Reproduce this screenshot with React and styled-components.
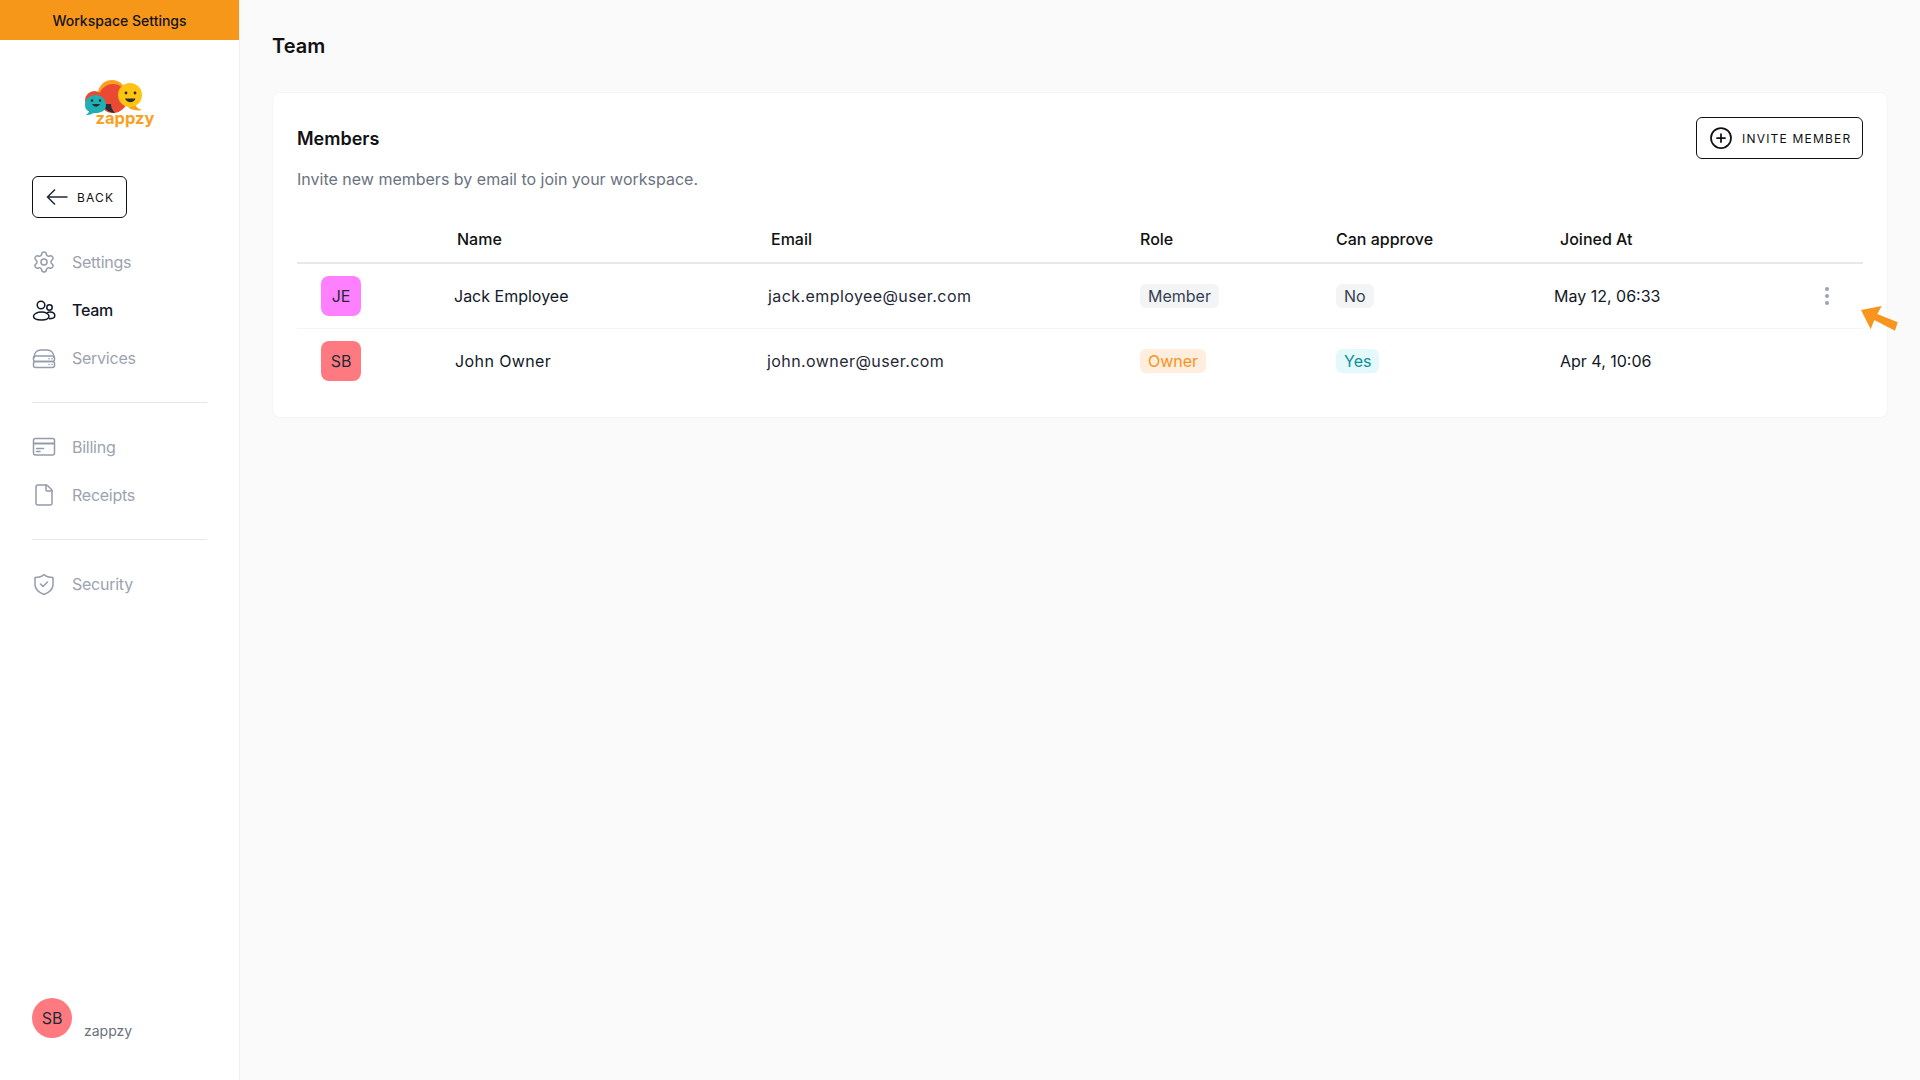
import React from "react";
import styled, { createGlobalStyle } from "styled-components";
import { CirclePlus, EllipsisVertical, File, Settings } from "lucide-react";

const GlobalStyle = createGlobalStyle`
  html, body {
    margin: 0;
    padding: 0;
    background: #fafafa;
    font-family: Inter, "Liberation Sans", sans-serif;
  }
  * {
    box-sizing: border-box;
  }
`;

const Page = styled.div`
  display: flex;
  width: 1920px;
  height: 1080px;
  overflow: hidden;
  background: #fafafa;
`;

const Sidebar = styled.aside`
  width: 240px;
  flex-shrink: 0;
  display: flex;
  flex-direction: column;
  background: #fff;
  border-right: 1px solid #f0f0f0;
`;

const Banner = styled.div`
  height: 40px;
  display: flex;
  align-items: center;
  justify-content: center;
  background: #f7971a;
  color: #14141a;
  font-size: 14px;
  font-weight: 500;
`;

const LogoWrap = styled.div`
  display: flex;
  justify-content: center;
  padding-top: 38px;
  height: 136px;
`;

const OutlineButton = styled.button`
  display: flex;
  align-items: center;
  height: 42px;
  background: #fff;
  border: 1px solid #111;
  border-radius: 6px;
  color: #111;
  font-family: inherit;
  font-size: 12px;
  font-weight: 400;
  letter-spacing: 1.2px;
  padding: 0;
`;

const BackButton = styled(OutlineButton)`
  width: 95px;
  margin-left: 32px;
  padding-left: 13px;
  gap: 9px;
`;

const Nav = styled.nav`
  display: flex;
  flex-direction: column;
  padding: 20px 32px 0;
`;

const NavItem = styled.div`
  display: flex;
  align-items: center;
  height: 48px;
  gap: 16px;
  font-size: 16px;
  letter-spacing: -0.25px;
  font-weight: ${(p) => (p.$active ? 500 : 400)};
  color: ${(p) => (p.$active ? "#111827" : "#9ca3af")};
  svg {
    width: 24px;
    height: 24px;
    flex-shrink: 0;
    color: ${(p) => (p.$active ? "#111827" : "#949baa")};
  }
`;

const Divider = styled.div`
  height: 1px;
  background: #e5e7eb;
  margin: 20px 0 20px;
`;

const Account = styled.div`
  margin-top: auto;
  display: flex;
  padding: 0 32px 42px;
  gap: 12px;
`;

const RoundAvatar = styled.div`
  width: 40px;
  height: 40px;
  border-radius: 50%;
  display: flex;
  align-items: center;
  justify-content: center;
  background: #ff7a80;
  color: #1f2937;
  font-size: 16px;
`;

const AccountName = styled.span`
  align-self: flex-end;
  font-size: 14px;
  color: #6b7280;
  line-height: 16px;
  margin-bottom: -1px;
`;

const Main = styled.main`
  flex: 1;
  padding: 32px 32px 0;
`;

const Title = styled.h1`
  margin: 0 0 32px;
  font-size: 20px;
  line-height: 28px;
  font-weight: 600;
  color: #111;
`;

const Card = styled.section`
  position: relative;
  height: 326px;
  background: #fff;
  border: 1px solid #f5f5f5;
  border-radius: 8px;
  padding: 24px;
`;

const CardHeader = styled.div`
  display: flex;
  justify-content: space-between;
  align-items: flex-start;
`;

const CardTitle = styled.h2`
  margin: 10px 0 0;
  font-size: 18px;
  line-height: 24px;
  font-weight: 600;
  color: #111;
`;

const InviteButton = styled(OutlineButton)`
  width: 167px;
  padding-left: 12px;
  gap: 9px;
`;

const Subtitle = styled.p`
  margin: 8px 0 0;
  font-size: 16px;
  line-height: 24px;
  color: #6b7280;
`;

const Row = styled.div`
  display: grid;
  grid-template-columns: 157px 313px 373px 196px 218px 246px 1fr;
  align-items: center;
  height: ${(p) => (p.$last ? "64px" : "65px")};
  border-bottom: ${(p) => (p.$last ? "none" : "1px solid #f3f4f6")};
  font-size: 16px;
  color: #1f2937;
`;

const HeadRow = styled(Row)`
  margin-top: 25px;
  height: 48px;
  border-bottom: 2px solid #e9e9ea;
`;

const HeadCell = styled.div`
  font-weight: 500;
  color: #111;
  padding-left: ${(p) => p.$indent || 0}px;
`;

const Cell = styled.div`
  padding-left: ${(p) => p.$indent || 0}px;
  color: ${(p) => p.$color || "#1f2937"};
  letter-spacing: ${(p) => p.$spacing || 0}px;
`;

const SquareAvatar = styled.div`
  width: 40px;
  height: 40px;
  margin-left: 24px;
  border-radius: 8px;
  display: flex;
  align-items: center;
  justify-content: center;
  background: ${(p) => p.$bg};
  color: #1f2937;
  font-size: 16px;
`;

const tones = {
  gray: { bg: "#f3f4f6", fg: "#374151" },
  orange: { bg: "#ffeedd", fg: "#f7931e" },
  teal: { bg: "#e4f9fb", fg: "#0e8f96" },
};

const Badge = styled.span`
  display: inline-block;
  padding: 0 8px;
  height: 24px;
  line-height: 24px;
  border-radius: 6px;
  font-size: 16px;
  background: ${(p) => tones[p.$tone].bg};
  color: ${(p) => tones[p.$tone].fg};
`;

const Actions = styled.div`
  display: flex;
  padding-left: 15px;
  color: #9ca3af;
`;

const Pointer = styled.svg`
  position: absolute;
  left: 1587px;
  top: 212px;
  width: 40px;
  height: 28px;
`;

const ZappzyLogo = () => (
  <svg width="72" height="52" viewBox="84 78 72 52">
    <circle cx="112" cy="94" r="14" fill="#f9a11f" />
    <circle cx="113" cy="98.500" r="14.500" fill="#ea4a33" />
    <path d="M102 104c2 5 8 9 13 9-3-3-4-6-4-9z" fill="#2b2b38" />
    <path d="M126 102l3 6c3 2 9 3 13 2-4-1-6-3-7-6z" fill="#f7a11e" />
    <circle cx="130" cy="95" r="12" fill="#ffc412" />
    <circle cx="126" cy="93" r="1.400" fill="#2b2b38" />
    <circle cx="135" cy="93" r="1.400" fill="#2b2b38" />
    <path d="M125 98.500c2 5 9 5 10.500 0z" fill="#2b2b38" />
    <circle cx="94.500" cy="100.500" r="9.500" fill="#ea4a33" />
    <path d="M85 105c0-6 5-10 10.500-10S106 99 106 105s-5 8-10.500 8c-1.500 0-2 0-3 .5-2 1-4 1.500-7 1.500 2-1 3-2 3.500-3.500C86 110 85 108 85 105z" fill="#1fb0b4" />
    <circle cx="92" cy="100.500" r="1.200" fill="#2b2b38" />
    <circle cx="100" cy="100.500" r="1.200" fill="#2b2b38" />
    <path d="M92 104c2 3.500 6 3.500 8 0z" fill="#2b2b38" />
    <text x="95.500" y="124" fontFamily="Inter, sans-serif" fontSize="16.500" fontWeight="700" fill="#f9a11f">zappzy</text>
  </svg>
);

const BackArrow = () => (
  <svg width="22" height="24" viewBox="0 0 22 24" fill="none" stroke="#1f2937" strokeWidth="1.500">
    <path d="M1.500 12h20M9 4.500L1.500 12 9 19.500" />
  </svg>
);

const TeamIcon = () => (
  <svg viewBox="0 0 24 24" fill="none" stroke="currentColor" strokeWidth="1.500">
    <circle cx="9" cy="7" r="3.800" />
    <circle cx="17.500" cy="9.500" r="2.700" />
    <path d="M9.500 14c-4.500 0-8 2-8 4.300S5 22 9.500 22s7.500-1.400 7.500-3.700S14 14 9.500 14z" />
    <path d="M15 14.800c1-.6 2-.8 3-.8 3 0 4.800 1.800 4.800 3.800 0 1.700-1.800 3-5.800 3" />
  </svg>
);

const ServicesIcon = () => (
  <svg viewBox="0 0 24 24" fill="none" stroke="currentColor" strokeWidth="1.500">
    <path d="M2 12c0-5 3-8 7-8h6c4 0 7 3 7 8" />
    <rect x="1.500" y="10" width="21" height="5.500" rx="2" />
    <rect x="1.500" y="15.500" width="21" height="6" rx="2" />
    <path d="M17 12.700h.1M20 12.700h.1M17 18.500h.1M20 18.500h.1" strokeLinecap="round" />
  </svg>
);

const BillingIcon = () => (
  <svg viewBox="0 0 24 24" fill="none" stroke="currentColor" strokeWidth="1.500">
    <rect x="1.500" y="3.500" width="21" height="16.500" rx="2" />
    <path d="M1.500 8.500h21" strokeWidth="2" />
    <path d="M4.500 13.500h7M4.500 16.500h3.500" strokeLinecap="round" />
  </svg>
);

const SecurityIcon = () => (
  <svg viewBox="0 0 24 24" fill="none" stroke="currentColor" strokeWidth="1.500" strokeLinejoin="round">
    <path d="M12 2.500c2 2 5 3 9 3v7c0 5-4 8-9 10-5-2-9-5-9-10v-7c4 0 7-1 9-3z" />
    <path d="M8.500 12l2.500 2.500 4.500-4.500" strokeLinecap="round" />
  </svg>
);

const members = [
  {
    initials: "JE",
    color: "#ff80ff",
    name: "Jack Employee",
    nameSpacing: 0,
    email: "jack.employee@user.com",
    emailIndent: 1,
    role: "Member",
    roleTone: "gray",
    approve: "No",
    approveTone: "gray",
    joined: "May 12, 06:33",
    joinedIndent: 0,
    menu: true,
  },
  {
    initials: "SB",
    color: "#ff7a80",
    name: "John Owner",
    nameIndent: 1,
    nameSpacing: 0.4,
    email: "john.owner@user.com",
    emailIndent: 0,
    role: "Owner",
    roleTone: "orange",
    approve: "Yes",
    approveTone: "teal",
    joined: "Apr 4, 10:06",
    joinedIndent: 6,
    menu: false,
  },
];

const App = () => {
  return (
    <Page>
      <GlobalStyle />
      <Sidebar>
        <Banner>Workspace Settings</Banner>
        <LogoWrap>
          <ZappzyLogo />
        </LogoWrap>
        <BackButton>
          <BackArrow />
          BACK
        </BackButton>
        <Nav>
          <NavItem><Settings strokeWidth={1.5} />Settings</NavItem>
          <NavItem $active><TeamIcon />Team</NavItem>
          <NavItem><ServicesIcon />Services</NavItem>
          <Divider />
          <NavItem><BillingIcon />Billing</NavItem>
          <NavItem><File strokeWidth={1.5} />Receipts</NavItem>
          <Divider />
          <NavItem><SecurityIcon />Security</NavItem>
        </Nav>
        <Account>
          <RoundAvatar>SB</RoundAvatar>
          <AccountName>zappzy</AccountName>
        </Account>
      </Sidebar>
      <Main>
        <Title>Team</Title>
        <Card>
          <CardHeader>
            <CardTitle>Members</CardTitle>
            <InviteButton>
              <CirclePlus size={24} strokeWidth={1.75} />
              INVITE MEMBER
            </InviteButton>
          </CardHeader>
          <Subtitle>Invite new members by email to join your workspace.</Subtitle>
          <HeadRow>
            <HeadCell />
            <HeadCell $indent={3}>Name</HeadCell>
            <HeadCell $indent={4}>Email</HeadCell>
            <HeadCell>Role</HeadCell>
            <HeadCell>Can approve</HeadCell>
            <HeadCell $indent={6}>Joined At</HeadCell>
            <HeadCell />
          </HeadRow>
          {members.map((m, i) => (
            <Row key={m.email} $last={i === members.length - 1}>
              <SquareAvatar $bg={m.color}>{m.initials}</SquareAvatar>
              <Cell $indent={m.nameIndent} $spacing={m.nameSpacing} $color="#111827">{m.name}</Cell>
              <Cell $indent={m.emailIndent} $spacing={0.42}>{m.email}</Cell>
              <Cell><Badge $tone={m.roleTone}>{m.role}</Badge></Cell>
              <Cell><Badge $tone={m.approveTone}>{m.approve}</Badge></Cell>
              <Cell $indent={m.joinedIndent} $color="#111827">{m.joined}</Cell>
              <Actions>{m.menu && <EllipsisVertical size={24} strokeWidth={2} />}</Actions>
            </Row>
          ))}
          <Pointer viewBox="0 0 40 28">
            <polygon points="1,5 21.700,1 17.300,9 37.700,17.300 35,25.700 14.300,15 10.700,24.300" fill="#f7951d" />
          </Pointer>
        </Card>
      </Main>
    </Page>
  );
};

export default App;
